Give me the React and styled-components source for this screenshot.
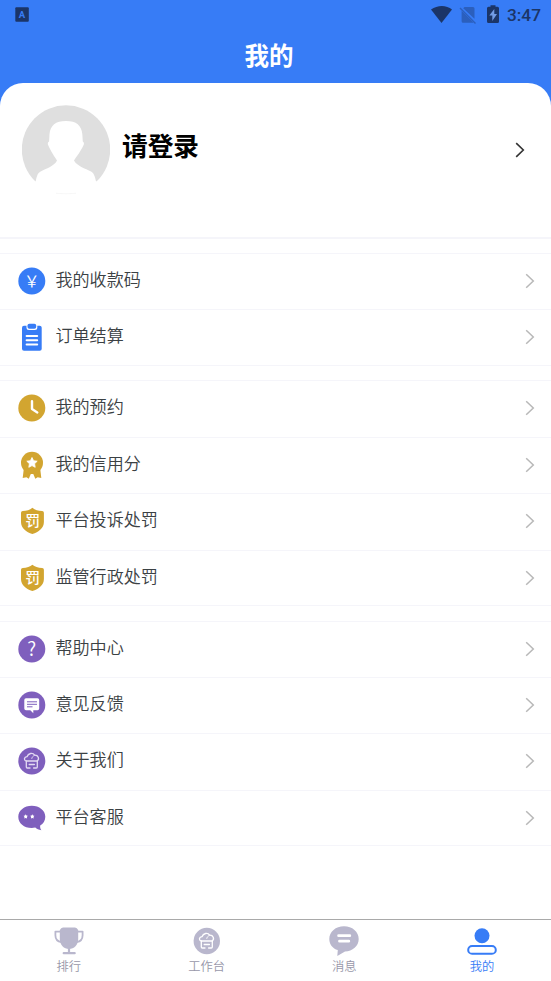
import React from "react";
import styled, { createGlobalStyle } from "styled-components";

const colors = {
  blue: "#377cf6",
  gold: "#d2a530",
  purple: "#7f5fbd",
  muted: "#b9b7cd",
  mutedText: "#9897a9",
  text: "#3b4144",
  status: "#1b3568",
  line: "#f5f5fa",
};

const cjk = '"Noto Sans CJK SC", sans-serif';

const GlobalStyle = createGlobalStyle`
  * {
    box-sizing: border-box;
  }
  body {
    margin: 0;
    font-family: ${cjk};
    background: #fff;
  }
`;

const Screen = styled.div`
  display: flex;
  flex-direction: column;
  height: 981px;
  overflow: hidden;
  background: ${colors.blue};
`;

const StatusBar = styled.div`
  display: flex;
  justify-content: space-between;
  height: 30px;
  padding: 0 10px 0 15px;
`;

const StatusIcons = styled.div`
  display: flex;
`;

const Clock = styled.span`
  margin-left: 7px;
  font: 500 17.3px/31px Roboto, sans-serif;
  color: ${colors.status};
`;

const Header = styled.h1`
  height: 53px;
  margin: 0;
  padding-right: 13px;
  font-size: 24.5px;
  line-height: 50px;
  font-weight: 700;
  color: #fff;
  text-align: center;
`;

const Sheet = styled.main`
  flex: 1;
  background: #fff;
  border-radius: 23px 23px 0 0;
`;

const Profile = styled.div`
  display: flex;
  align-items: flex-start;
  height: 156px;
  padding: 22px 26px 0 22px;
  border-bottom: 2px solid ${colors.line};
`;

const LoginText = styled.div`
  flex: 1;
  margin-left: 12px;
  font-size: 25.7px;
  line-height: 80px;
  font-weight: 700;
  color: #000;
`;

const ProfileArrow = styled.div`
  padding-top: 34px;
`;

const Group = styled.section`
  margin-top: ${(props) => props.$gap}px;
  border-top: 1px solid ${colors.line};
`;

const Row = styled.div`
  display: flex;
  align-items: center;
  height: 56.4px;
  padding: 0 16px 1.2px 18px;
  border-bottom: 1px solid ${colors.line};

  &:last-child {
    height: 55.4px;
    padding-bottom: 0.2px;
  }
`;

const RowLabel = styled.span`
  flex: 1;
  margin: -4px 0 0 9.4px;
  font-size: 17.1px;
  line-height: 26px;
  font-weight: 350;
  color: ${colors.text};
`;

const TabBar = styled.nav`
  display: grid;
  grid-template-columns: repeat(4, 1fr);
  height: 62px;
  background: #fff;
  border-top: 1px solid #a9a9a9;
`;

const Tab = styled.div`
  display: flex;
  flex-direction: column;
  align-items: center;
  padding-top: 6px;
  font-size: 12.3px;
  line-height: 18px;
  font-weight: 350;
  color: ${(props) => (props.$active ? colors.blue : colors.mutedText)};
`;

const TabLabel = styled.span`
  margin-top: 1px;
`;

const Chevron = ({ color, width = 1.5 }) => (
  <svg width="10" height="16" viewBox="0 0 10 16" fill="none">
    <path d="M1.2 1.2 8.3 8l-7.1 6.8" stroke={color} strokeWidth={width} />
  </svg>
);

const Icon = ({ children }) => (
  <svg width="28" height="28" viewBox="0 0 28 28" fill="none">
    {children}
  </svg>
);

const Disc = ({ color }) => <circle cx="13.8" cy="14" r="13.5" fill={color} />;

// chef hat over a stall, shared by the about row and the workbench tab
const StallMark = ({ stroke }) => (
  <g stroke={stroke} strokeWidth="1.3" strokeLinecap="round" strokeLinejoin="round">
    <path d="M8 14C5.4 12.8 6.2 9.9 9 9.7 10.2 6 14.8 5.4 16.6 8.2c3.6-.2 5.2 3.8 2.6 5.8H8Z" />
    <path d="M13.8 11.4c.2-1.2 1-2.2 2.6-3.1" strokeWidth="1" />
    <path d="M8.3 14v6q0 1 1 1h2.700M19.300 14v6q0 1-1 1h-2.700M11.200 17.500h5.200" />
  </g>
);

const PayIcon = () => (
  <Icon>
    <Disc color={colors.blue} />
    <text x="13.8" y="19.6" fontSize="15.5" fontWeight="350" fill="#fff" textAnchor="middle" fontFamily={cjk}>{"\uffe5"}</text>
  </Icon>
);

const OrderIcon = () => (
  <Icon>
    <rect x="4" y="2.8" width="19.7" height="25" rx="2" fill={colors.blue} />
    <rect x="8.5" y="0" width="10.8" height="7.1" rx="2.5" fill="#fff" />
    <rect x="9.5" y="0.8" width="8.7" height="5" rx="1.8" fill={colors.blue} />
    <path d="M8.6 12.9h10.6M8.6 17.3h10.6M8.6 21.5h10.6" stroke="#fff" strokeWidth="2" strokeLinecap="round" />
  </Icon>
);

const ClockIcon = () => (
  <Icon>
    <Disc color={colors.gold} />
    <path d="M14 7.3v7.8l5.3 3.3" stroke="#fff" strokeWidth="2.4" strokeLinecap="round" strokeLinejoin="round" />
  </Icon>
);

const CreditIcon = () => (
  <Icon>
    <path
      d="M6 16 4.7 27l3.7-.8 2.4 1.5 2-4.7h2.5l2 4.7 2.4-1.5 3.6.8L22 16Z"
      fill={colors.gold}
    />
    <circle cx="14" cy="11.7" r="11" fill={colors.gold} />
    <path
      d="m14 6.5 1.6 3.2 3.6.5-2.6 2.5.6 3.6-3.2-1.7-3.2 1.7.6-3.6-2.6-2.5 3.6-.5Z"
      fill="#fff"
      stroke="#fff"
      strokeWidth=".8"
      strokeLinejoin="round"
    />
  </Icon>
);

const PenaltyIcon = () => (
  <Icon>
    <path
      d="M14.4.8c2.1 1.8 5.8 3.3 9.7 3.3q1.8 0 1.8 1.7v9.1c0 6-5.3 10-11.5 12.1C8.2 24.9 3 20.9 3 14.9V5.8q0-1.7 1.8-1.7c3.8 0 7.5-1.5 9.6-3.3Z"
      fill={colors.gold}
    />
    <text x="14.6" y="19.2" fontSize="14.8" fontWeight="500" fill="#fff" textAnchor="middle" fontFamily={cjk}>罚</text>
  </Icon>
);

const HelpIcon = () => (
  <Icon>
    <Disc color={colors.purple} />
    <text x="13.8" y="20.8" fontSize="19" fontWeight="350" fill="#fff" textAnchor="middle" fontFamily={cjk}>?</text>
  </Icon>
);

const FeedbackIcon = () => (
  <Icon>
    <Disc color={colors.purple} />
    <path
      d="M8 7.3h11.5q1.7 0 1.7 1.7v8.5q0 1.7-1.7 1.7h-4.2v3l-3-3H8q-1.7 0-1.7-1.7V9q0-1.7 1.7-1.7Z"
      fill="#fff"
    />
    <path d="M9 10.8h10M9 13.3h10M9 15.8h5.5" stroke={colors.purple} strokeWidth="1" />
  </Icon>
);

const AboutIcon = () => (
  <Icon>
    <Disc color={colors.purple} />
    <StallMark stroke="#e3daf2" />
  </Icon>
);

const Star = ({ x, y }) => (
  <path
    transform={`translate(${x} ${y})`}
    d="m0-2.1.7 1.2 1.4.3-.9 1.1.2 1.5L0 1.5l-1.4.5.2-1.5-.9-1.1 1.4-.3Z"
    fill="#fff"
  />
);

const ServiceIcon = () => (
  <Icon>
    <path
      d="M13.8 1.8c7.5 0 13.5 4.7 13.5 10.9 0 4-2 6.9-5.1 8.8-.2 1.5.1 3.5 1.2 4.8-2.8-.3-4.6-1.3-6.1-2.700-9.600 1.600-17-3.300-17-10.900 0-6.200 6-10.900 13.500-10.900Z"
      fill={colors.purple}
    />
    <Star x={7.7} y={12.4} />
    <Star x={14.3} y={12.4} />
  </Icon>
);

const TrophyIcon = () => (
  <svg width="30" height="30" viewBox="0 0 30 30" fill="none">
    <path d="M9 1.500h12q2 0 3.200 2.500v9c0 6-4.200 10-9.200 10s-9.200-4-9.200-10V4Q7 1.500 9 1.500Z" fill={colors.muted} />
    <path
      d="M6 5.600H1.400v3.600c0 4 2 6.300 6 6.900M24 5.600h4.600v3.600c0 4-2 6.300-6 6.900"
      stroke={colors.muted}
      strokeWidth="1.8"
      strokeLinejoin="round"
    />
    <path d="M15 20v6M9.700 27.200h11" stroke={colors.muted} strokeWidth="2.2" strokeLinecap="round" />
  </svg>
);

const WorkbenchIcon = () => (
  <svg width="30" height="30" viewBox="-1 -1 30 30" fill="none">
    <circle cx="13.8" cy="14" r="13.2" fill={colors.muted} />
    <StallMark stroke="#fff" />
  </svg>
);

const MessageIcon = () => (
  <svg width="30" height="30" viewBox="0 0 30 30" fill="none">
    <path
      d="M15 .3c8.3 0 14.7 5.500 14.700 12.600 0 7-6.200 12.300-13.700 12.500L8.300 30l.5-5.900C3.700 22.300.3 18.200.3 12.900.3 5.800 6.700.3 15 .3Z"
      fill={colors.muted}
    />
    <path d="M9.600 9.700h11.200M10.500 15.200h9.300" stroke="#fff" strokeWidth="2.8" strokeLinecap="round" />
  </svg>
);

const MineIcon = () => (
  <svg width="30" height="30" viewBox="0 0 30 30" fill="none">
    <circle cx="15" cy="9.7" r="7.5" fill={colors.blue} />
    <rect x="1.2" y="20" width="27.6" height="7.8" rx="3.9" stroke={colors.blue} strokeWidth="2" />
  </svg>
);

const Avatar = () => (
  <svg width="88" height="90" viewBox="0 0 88 90">
    <circle cx="44" cy="44.5" r="44.2" fill="#dfdfdf" />
    <path
      d="M44 16c10.500 0 15.500 4.500 16.300 13l.5 7.500q1.500.5 1 3c-1.500 4-5.300 9.500-9.800 16 2.800 5.500 11 8 17.500 11.200 2.500 1.500 3.800 5.800 4.500 9.800H88v14H0v-14h13.700c.7-4 1.800-8.500 4.500-9.800C24.500 63.500 32.500 61 35 55.500 30.500 49 27.500 43.500 25.900 39.500q-.5-2.500 1.200-3l.4-7.500C28.300 20.500 33.500 16 44 16Z"
      fill="#fff"
    />
    <path d="M34 88.300q10 1 20 0" stroke="#f4f4f4" strokeWidth=".7" fill="none" />
  </svg>
);

const groups = [
  {
    gap: 14,
    items: [
      { label: "我的收款码", icon: PayIcon },
      { label: "订单结算", icon: OrderIcon },
    ],
  },
  {
    gap: 14.6,
    items: [
      { label: "我的预约", icon: ClockIcon },
      { label: "我的信用分", icon: CreditIcon },
      { label: "平台投诉处罚", icon: PenaltyIcon },
      { label: "监管行政处罚", icon: PenaltyIcon },
    ],
  },
  {
    gap: 14.6,
    items: [
      { label: "帮助中心", icon: HelpIcon },
      { label: "意见反馈", icon: FeedbackIcon },
      { label: "关于我们", icon: AboutIcon },
      { label: "平台客服", icon: ServiceIcon },
    ],
  },
];

const tabs = [
  { label: "排行", icon: TrophyIcon },
  { label: "工作台", icon: WorkbenchIcon },
  { label: "消息", icon: MessageIcon },
  { label: "我的", icon: MineIcon, active: true },
];

const App = () => (
  <Screen>
    <GlobalStyle />
    <StatusBar>
      <svg width="14" height="30" viewBox="0 0 14 30">
        <rect x=".3" y="7.3" width="13.5" height="14.5" rx="1" fill={colors.status} />
        <text x="7" y="18" fontSize="9.5" fontWeight="700" fill={colors.blue} textAnchor="middle" fontFamily="Roboto, sans-serif">A</text>
      </svg>
      <StatusIcons>
        <svg width="70" height="30" viewBox="0 0 70 30">
          <path d="M1 9.500C7.500 4.800 16.500 4.800 22 9.500L11.500 23Z" fill={colors.status} />
          <path d="m34.500 7h8.500q1.500 0 1.500 1.500v10.300L33.200 8.300ZM31.600 10.700l12 12H33.100q-1.500 0-1.500-1.500Z" fill="#2b5fbd" />
          <path d="m30 8 15.500 15.500" stroke="#2b5fbd" strokeWidth="1.4" />
          <path d="M58.500 6.800h2V5.300h5v1.500h2q1.500 0 1.500 1.500v13.200q0 1.500-1.500 1.500h-9q-1.500 0-1.500-1.500V8.300q0-1.500 1.500-1.500Z" fill={colors.status} />
          <path d="m64.300 9-5 6.500h3v5.500l4.700-7h-2.700Z" fill="#719be5" />
        </svg>
        <Clock>3:47</Clock>
      </StatusIcons>
    </StatusBar>
    <Header>我的</Header>
    <Sheet>
      <Profile>
        <Avatar />
        <LoginText>请登录</LoginText>
        <ProfileArrow>
          <Chevron color="#333" width={1.6} />
        </ProfileArrow>
      </Profile>
      {groups.map((group) => (
        <Group key={group.items[0].label} $gap={group.gap}>
          {group.items.map(({ label, icon: RowIcon }) => (
            <Row key={label}>
              <RowIcon />
              <RowLabel>{label}</RowLabel>
              <Chevron color="#b8b8b8" />
            </Row>
          ))}
        </Group>
      ))}
    </Sheet>
    <TabBar>
      {tabs.map(({ label, icon: TabIcon, active }) => (
        <Tab key={label} $active={active}>
          <TabIcon />
          <TabLabel>{label}</TabLabel>
        </Tab>
      ))}
    </TabBar>
  </Screen>
);

export default App;
